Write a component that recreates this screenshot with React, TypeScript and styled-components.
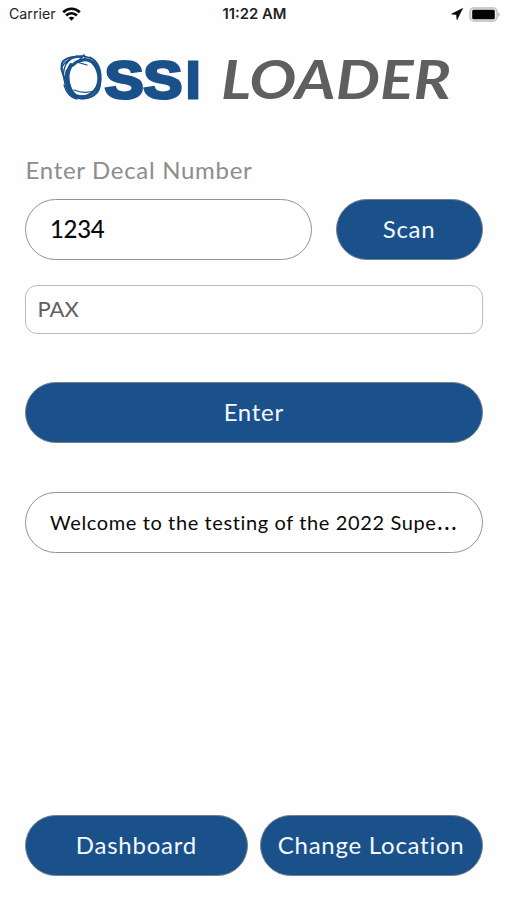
import React from "react";
import styled, { createGlobalStyle } from "styled-components";

const GlobalStyle = createGlobalStyle`
  * { box-sizing: border-box; }
  body { margin: 0; background: #fefefe; }
`;

const Screen = styled.main`
  width: 507px;
  height: 900px;
  display: flex;
  flex-direction: column;
  background: #fefefe;
  font-family: Lato, "Open Sans", sans-serif;
`;

const StatusBar = styled.header`
  height: 28px;
  padding: 0 7px 0 9px;
  display: grid;
  grid-template-columns: 1fr auto 1fr;
  align-items: center;
  font-family: Inter, sans-serif;
  font-size: 14.2px;
  line-height: 28px;
  color: #222;
`;

const StatusGroup = styled.div<{ $end?: boolean }>`
  display: flex;
  align-items: center;
  justify-content: ${(p) => (p.$end ? "flex-end" : "flex-start")};
  gap: 6px;
`;

const Clock = styled.span`
  font-size: 14.8px;
  font-weight: 600;
`;

const Brand = styled.div`
  height: 92px;
  svg { display: block; }
`;

const Content = styled.section`
  flex: 1;
  display: flex;
  flex-direction: column;
  padding: 34px 24.5px 24.5px 25px;
`;

const Text = styled.span<{ $size?: number; $spacing?: number; $weight?: number }>`
  font-size: ${(p) => p.$size ?? 24}px;
  letter-spacing: ${(p) => p.$spacing ?? 0}px;
  font-weight: ${(p) => p.$weight ?? 400};
  white-space: nowrap;
`;

const Ellipsis = styled.span`
  margin-left: 1px;
  font-weight: 700;
  letter-spacing: 2.3px;
`;

const FieldLabel = styled.label`
  height: 45px;
  padding-left: 0.5px;
  line-height: 31px;
  color: #8d8d8d;
`;

const Row = styled.div<{ $gap: number }>`
  display: flex;
  gap: ${(p) => p.$gap}px;
`;

const Pill = styled.div`
  flex: 1;
  min-width: 0;
  height: 61px;
  padding: 0 20px 2px 24px;
  display: flex;
  align-items: center;
  border: 1.5px solid #939393;
  border-radius: 31px;
  background: #fff;
  color: #090909;
`;

const Button = styled.button<{ $width?: number }>`
  ${(p) => (p.$width ? `width: ${p.$width}px;` : "flex: 1;")}
  height: 61px;
  padding: 0 0 2px;
  border: 1px solid #75828c;
  border-radius: 31px;
  background: #1b518b;
  color: #f4f9ff;
  font-family: inherit;
`;

const PaxField = styled.div`
  height: 49px;
  margin: 25px 0 48.4px;
  padding: 0 11.5px 2px;
  display: flex;
  align-items: center;
  border: 1.5px solid #bcbcbc;
  border-radius: 12px;
  color: #606060;
`;

const Message = styled(Row)`
  margin-top: 49px;
`;

const Footer = styled(Row)`
  margin-top: auto;
`;

const WifiIcon = () => (
  <svg width="19" height="15" viewBox="0 0 19 15" fill="none" stroke="#080808" strokeWidth="2.7">
    <path d="M1.2 5.2C5.8.6 13.2.6 17.8 5.2" />
    <path d="M4.1 8.5c3-3 7.8-3 10.8 0" />
    <path d="M9.5 13.7 6.6 10.8c1.6-1.5 4.2-1.5 5.8 0z" fill="#080808" stroke="none" />
  </svg>
);

const LocationIcon = () => (
  <svg width="12" height="12" viewBox="0 0 12 12">
    <path d="M11.5.5.7 6l4.9.6.4 5z" fill="#080808" stroke="#080808" strokeWidth=".7" strokeLinejoin="round" />
  </svg>
);

const BatteryIcon = () => (
  <svg width="31" height="15" viewBox="0 0 31 15">
    <rect x="1" y="1" width="27" height="13" rx="4" fill="#ededed" stroke="#cbcbcb" strokeWidth="1.8" />
    <rect x="3.2" y="2.7" width="22.6" height="9.6" rx="1.5" fill="#050505" />
    <path d="M29.2 5v5c2-.8 2-4.2 0-5" fill="#bdbdbd" />
  </svg>
);

const Logo = () => (
  <svg width="507" height="92" viewBox="0 28 507 92" role="img" aria-label="OSSI Loader">
    <g fill="none" stroke="#1b518b" strokeLinecap="round">
      <path strokeWidth="4" d="M71 65c-5 8-4 17-1 24 3 7 8 9 14 8" />
      <path strokeWidth="3" d="M67 71c-2 10 1 23 8 25 9 3 18-1 22-9 4-9 1-19-5-25-6-4-14-2-19 3" />
      <path strokeWidth="2" d="M82 57c-9-1-17 1-20 6-2 7 2 15 5 21 4 7 6 12 12 14 8 2 17-2 20-9 3-9 0-21-6-27-6-5-16-3-21 4" />
      <path strokeWidth="1.4" d="M77 56c-10 3-15 12-13 23 1 9 5 16 11 19M66 63c4-7 15-9 24-5 8 3 11 12 11 21-1 10-5 17-14 19M61 69c3-8 12-12 22-13M94 61c7 8 8 20 3 30" />
      <path strokeWidth="1.3" d="M74 90c7 3 15 3 23 0M80 59l4-4 2 5-9 2 10 3M64 85c2 7 6 13 13 14M90 57c6 3 9 8 9 14" />
    </g>
    <g fill="#1b518b" stroke="#1b518b" strokeWidth="3" fontFamily="Liberation Sans, sans-serif" fontWeight="700" fontSize="51.5">
      <text x="104.8" y="97.5" textLength="77.5" lengthAdjust="spacingAndGlyphs">SS</text>
      <text x="186" y="97.5">I</text>
    </g>
    <text x="221" y="98.5" textLength="230" lengthAdjust="spacingAndGlyphs" fill="#5f5f60" fontFamily="Lato, sans-serif" fontWeight="700" fontStyle="italic" fontSize="54">LOADER</text>
  </svg>
);

export default function App() {
  return (
    <>
      <GlobalStyle />
      <Screen>
        <StatusBar>
          <StatusGroup><span>Carrier</span><WifiIcon /></StatusGroup>
          <Clock>11:22 AM</Clock>
          <StatusGroup $end><LocationIcon /><BatteryIcon /></StatusGroup>
        </StatusBar>
        <Brand><Logo /></Brand>
        <Content>
          <FieldLabel><Text $spacing={0.7}>Enter Decal Number</Text></FieldLabel>
          <Row $gap={24}>
            <Pill><Text $weight={500} $spacing={-0.3}>1234</Text></Pill>
            <Button $width={147}><Text $spacing={0.7}>Scan</Text></Button>
          </Row>
          <PaxField><Text $size={22}>PAX</Text></PaxField>
          <Row $gap={0}><Button><Text $spacing={0.7}>Enter</Text></Button></Row>
          <Message $gap={0}>
            <Pill><Text $size={20} $spacing={0.62}>Welcome to the testing of the 2022 Supe<Ellipsis>...</Ellipsis></Text></Pill>
          </Message>
          <Footer $gap={12}>
            <Button><Text $spacing={0.75}>Dashboard</Text></Button>
            <Button><Text $spacing={0.75}>Change Location</Text></Button>
          </Footer>
        </Content>
      </Screen>
    </>
  );
}
